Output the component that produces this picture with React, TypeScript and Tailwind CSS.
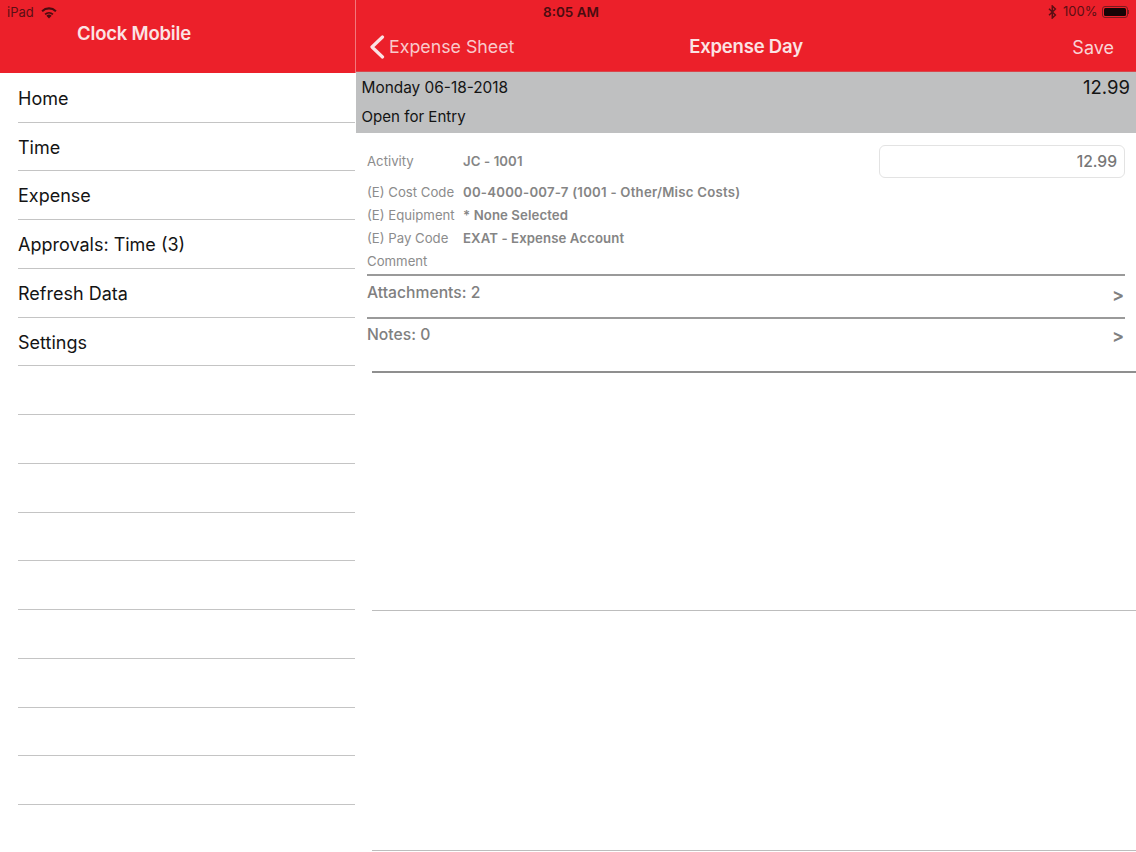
const menu = ['Home', 'Time', 'Expense', 'Approvals: Time (3)', 'Refresh Data', 'Settings', '', '', '', '', '', '', '', '', ''];

const details = [
  { label: '(E) Cost Code', value: '00-4000-007-7 (1001 - Other/Misc Costs)', wide: true },
  { label: '(E) Equipment', value: '* None Selected', wide: false },
  { label: '(E) Pay Code', value: 'EXAT - Expense Account', wide: false },
  { label: 'Comment', value: '', wide: false },
];

function Wifi() {
  return (
    <svg width="16" height="12" viewBox="0 0 16 12" className="text-[#4a0c10]">
      <path d="M8 11.5 5.4 8.7a3.7 3.7 0 0 1 5.2 0L8 11.5Z" fill="currentColor" />
      <path d="M3.5 6.7a6.5 6.5 0 0 1 9 0l-1.2 1.3a4.8 4.8 0 0 0-6.6 0L3.5 6.7Z" fill="currentColor" />
      <path d="M0.4 3.4a11 11 0 0 1 15.2 0l-1.4 1.6a9 9 0 0 0-12.4 0L0.4 3.4Z" fill="currentColor" />
    </svg>
  );
}

function Bluetooth() {
  return (
    <svg width="9" height="14" viewBox="0 0 9 14" fill="none" stroke="#5b0f14" strokeWidth="1.5" className="mr-[2px]">
      <path d="M1 3.8 7.4 10 4.3 13V1l3.1 3L1 10.2" />
    </svg>
  );
}

function Battery() {
  return (
    <div className="flex items-center">
      <div className="w-[26px] h-[12px] rounded-[3px] border border-[#7a1a1f] p-[1px]">
        <div className="w-full h-full rounded-[1.5px] bg-[#160406]" />
      </div>
      <div className="w-[1.5px] h-[4px] bg-[#7a1a1f]" />
    </div>
  );
}

function BackChevron() {
  return (
    <svg width="16" height="24" viewBox="0 0 16 24" fill="none" stroke="#fbe3e4" strokeWidth="3.2" strokeLinecap="round" strokeLinejoin="round">
      <path d="M13.5 2 3 12l10.5 10" />
    </svg>
  );
}

export default function App() {
  return (
    <div className="flex w-[1136px] h-[852px] overflow-hidden bg-white font-['Inter','Liberation_Sans',sans-serif]">
      <aside className="w-[356px] shrink-0">
        <div className="h-[73px] bg-[#ec202a] border-r border-[#f2777c] pl-[7px] pt-[5px]">
          <div className="flex items-center gap-[7px] h-[15px] text-[13px] text-[#5b0f14]">
            <span>iPad</span>
            <Wifi />
          </div>
          <div className="w-[254px] mt-[2px] text-center text-[18.5px] leading-[22px] font-semibold text-[#fbe3e4] tracking-[-0.2px]">
            Clock Mobile
          </div>
        </div>
        <ul className="pl-[18px] pr-[1px] pt-[0.75px]">
          {menu.map((item, i) => (
            <li
              key={i}
              className="h-[48.75px] flex items-center pt-[1.5px] border-b border-[#c4c4c4] text-[18px] text-[#141414]"
            >
              {item}
            </li>
          ))}
        </ul>
      </aside>

      <main className="flex-1 min-w-0">
        <header className="h-[72px] bg-[#ec202a] border-b border-[#d8474d]">
          <div className="relative h-[23px] flex items-center justify-end gap-[4px] pr-[7px] text-[13px] text-[#5b0f14]">
            <span className="absolute left-[187px] top-[2px] font-semibold text-[13.5px] text-[#4a0c10]">8:05 AM</span>
            <Bluetooth />
            <span>100%</span>
            <Battery />
          </div>
          <div className="flex items-center justify-between h-[48px] pr-[22px] text-[#fbe3e4]">
            <div className="flex items-center gap-[4px] w-[252px] pl-[13px]">
              <BackChevron />
              <span className="text-[17.8px] text-[#f9c9cb]">Expense Sheet</span>
            </div>
            <span className="text-[18.5px] font-semibold tracking-[-0.2px]">Expense Day</span>
            <span className="w-[230px] text-right text-[18px] text-[#f9d3d5]">Save</span>
          </div>
        </header>

        <section className="h-[61px] bg-[#bfc0c1] pl-[5.5px] pr-[6px] text-[#141414]">
          <div className="flex items-center justify-between h-[31px] text-[15.4px]">
            <span>Monday 06-18-2018</span>
            <span className="text-[18.5px]">12.99</span>
          </div>
          <div className="leading-[27px] text-[15.1px]">Open for Entry</div>
        </section>

        <section className="px-[11px]">
          <div className="flex items-center h-[45px] pt-[12px] text-[13.2px]">
            <span className="w-[96px] text-[#8c8c8c]">Activity</span>
            <span className="font-semibold tracking-[0.1px] text-[#858585]">JC - 1001</span>
            <div className="ml-auto w-[246px] h-[33px] rounded-[6px] border border-[#e3e3e3] flex items-center justify-end pr-[7px] text-[15.6px] font-medium text-[#777]">
              12.99
            </div>
          </div>
          <div className="pt-[3px] pb-[1px] border-b-2 border-[#9a9a9a]">
            {details.map(row => (
              <div key={row.label} className="flex items-center h-[23px] text-[13.2px]">
                <span className="w-[96px] text-[#8c8c8c]">{row.label}</span>
                <span className={row.wide ? 'font-semibold tracking-[0.23px] text-[#858585]' : 'font-semibold tracking-[0.1px] text-[#858585]'}>
                  {row.value}
                </span>
              </div>
            ))}
          </div>
          <div className="flex justify-between items-start h-[43px] pt-[6px] border-b-2 border-[#9a9a9a] text-[15.7px] leading-[22px] font-medium text-[#808080]">
            <span>Attachments: 2</span>
            <span className="mt-[2px] mr-[1px] text-[18px] font-semibold">&gt;</span>
          </div>
          <div className="flex justify-between items-start h-[52px] pt-[5px] text-[15.7px] leading-[22px] font-medium text-[#808080]">
            <span>Notes: 0</span>
            <span className="mt-[1px] mr-[1px] text-[18px] font-semibold">&gt;</span>
          </div>
        </section>

        <div className="h-[2px] bg-[#8f8f8f] ml-[16px]" />
        <div className="ml-[16px] h-[238px] border-b border-[#bdbdbd]" />
        <div className="ml-[16px] h-[240px] border-b border-[#bdbdbd]" />
      </main>
    </div>
  );
}
